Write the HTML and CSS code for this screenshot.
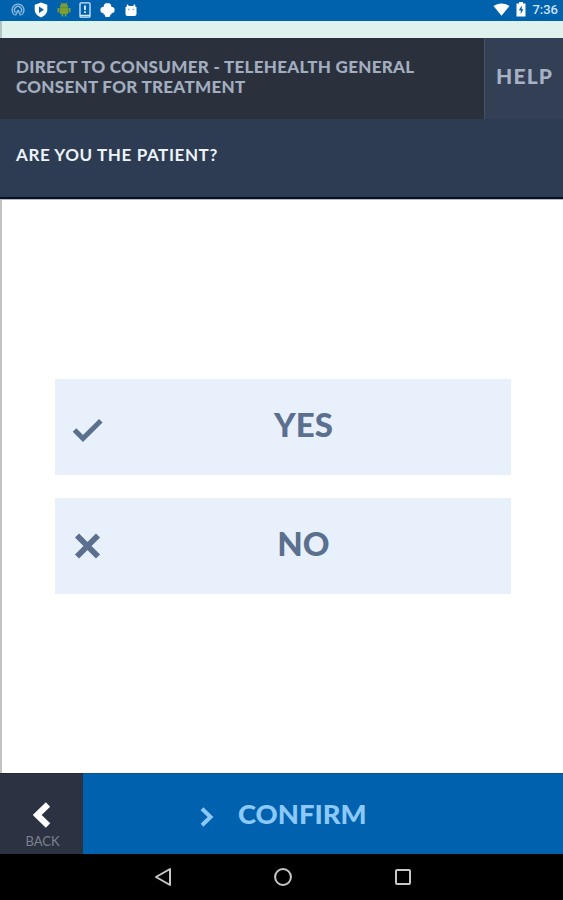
FILE: index.html
```html
<!DOCTYPE html>
<html lang="en">
<head>
    <meta charset="UTF-8">
    <meta name="viewport" content="width=device-width, initial-scale=1.0">
    <title>Consent for Treatment</title>
    <link rel="stylesheet" href="styles.css">
</head>
<body>

<div class="status-bar">
    <div class="status-icons">
        <svg width="14" height="14" viewBox="0 0 14 14" fill="none" stroke="#8dbbe0" stroke-width="1.4">
            <path d="M3.500 12A6 6 0 1 1 10.500 12"/>
            <path d="M4.500 9.500A3.500 3.500 0 1 1 9.500 9.500"/>
            <path d="M7 7L4.500 12.500M7 7L9.500 12.500"/>
        </svg>
        <svg width="14" height="16" viewBox="0 0 14 16">
            <path d="M7 .5L13.300 2.800V7.500C13.300 11 10.800 14 7 15.500C3.200 14 .7 11 .7 7.500V2.800Z" fill="#fff"/>
            <path d="M5 4.500L10 7.800L5 11Z" fill="#1260a6"/>
        </svg>
        <svg width="14" height="15" viewBox="0 0 14 15" fill="#7b9f35">
            <path d="M3 5.200A4 4 0 0 1 11 5.200ZM3 5.500H11V12H9.500V14.500H7.800V12H6.200V14.500H4.500V12H3ZM.5 6H2.500V10.500H.5ZM11.500 6H13.500V10.500H11.500Z"/>
            <path d="M4 .5L5.500 3M10 .5L8.500 3" stroke="#7b9f35"/>
        </svg>
        <svg width="12" height="16" viewBox="0 0 12 16">
            <rect x="1" y=".8" width="10" height="14.400" rx="1" fill="none" stroke="#d5e8f7" stroke-width="1.300"/>
            <path d="M1 13.500H11" stroke="#d5e8f7" stroke-width="1.500"/>
            <path d="M6 3.500V8M6 9.300V11" stroke="#fff" stroke-width="1.600"/>
        </svg>
        <svg width="15" height="16" viewBox="0 0 15 16" fill="#fff">
            <path d="M3.500 5L4 2.800L5.500 1.300H9.500L11 2.800L11.500 5H13L14.500 6.500V9.500L13 11H11.500V12.500H10.500L9.500 15H5.500L4.500 12.500H3.500V11H2L.5 9.500V6.500L2 5Z"/>
        </svg>
        <svg width="14" height="14" viewBox="0 0 14 14">
            <path d="M1.500 4H2.500L3 1L5 3H9L11 1L11.500 4H12.500V11Q12.500 13 10.500 13H3.500Q1.500 13 1.500 11Z" fill="#fff"/>
            <path d="M4 6.500H5.500M8.500 6.500H10" stroke="#7eafe0" stroke-width="1.300"/>
        </svg>
    </div>
    <div class="status-right">
        <svg width="17" height="13" viewBox="0 0 17 13" fill="#fff">
            <path d="M.5 3C5 -.5 12 -.5 16.500 3L8.500 12.800Z"/>
        </svg>
        <svg class="battery" width="10" height="15" viewBox="0 0 10 15">
            <path d="M3 0H7V1.500H9.500V14.500H.5V1.500H3Z" fill="#fff"/>
            <path d="M5.800 3.500L2.800 8.300H4.700V12L7.500 7.200H5.800Z" fill="#0a63ae"/>
        </svg>
        <span class="clock">7:36</span>
    </div>
</div>

<div class="top-strip"></div>

<header class="header">
    <h1 class="title">DIRECT TO CONSUMER - TELEHEALTH GENERAL<br>CONSENT FOR TREATMENT</h1>
    <div class="help">HELP</div>
</header>

<section class="question">
    <h2 class="question-text">ARE YOU THE PATIENT?</h2>
</section>

<main class="options">
    <div class="option">
        <svg class="option-icon" width="32" height="26" viewBox="0 0 32 26" fill="none" stroke="#5b6f8f" stroke-width="5">
            <path d="M2.500 13L11 21.500L28.800 3.700"/>
        </svg>
        <span class="option-label">YES</span>
    </div>
    <div class="option">
        <svg class="option-icon icon-no" width="32" height="26" viewBox="0 0 32 26" fill="none" stroke="#5b6f8f" stroke-width="5.800">
            <path d="M5 2.500L26 23.500M26 2.500L5 23.500"/>
        </svg>
        <span class="option-label">NO</span>
    </div>
</main>

<footer class="footer">
    <div class="back">
        <svg width="18" height="26" viewBox="0 0 18 26" fill="none" stroke="#fff" stroke-width="6.200">
            <path d="M15 2.500L4.200 13L15 23.500"/>
        </svg>
        <span class="back-label">BACK</span>
    </div>
    <div class="confirm">
        <svg class="confirm-icon" width="14" height="20" viewBox="0 0 14 20" fill="none" stroke="#8cc8f8" stroke-width="4">
            <path d="M2 1.800L10.500 10L2 18.200"/>
        </svg>
        <span class="confirm-label">CONFIRM</span>
    </div>
</footer>

<nav class="nav-bar">
    <svg width="20" height="20" viewBox="0 0 20 20" fill="none" stroke="#c8c8c8" stroke-width="2" stroke-linejoin="round">
        <path d="M17 2V18L3 10Z"/>
    </svg>
    <svg width="20" height="20" viewBox="0 0 20 20" fill="none" stroke="#c8c8c8" stroke-width="2">
        <circle cx="10" cy="10" r="7.900"/>
    </svg>
    <svg width="20" height="20" viewBox="0 0 20 20" fill="none" stroke="#c8c8c8" stroke-width="2">
        <rect x="3" y="3" width="14" height="14" rx="1"/>
    </svg>
</nav>

</body>
</html>
```
FILE: styles.css
```css
* {
    box-sizing: border-box;
}

body {
    margin: 0;
    height: 900px;
    display: flex;
    flex-direction: column;
    overflow: hidden;
    background-color: #fff;
    font-family: Lato, "Open Sans", sans-serif;
}

svg {
    display: block;
    flex-shrink: 0;
}

.status-bar {
    height: 21px;
    padding: 0 5px 2px 11px;
    display: flex;
    align-items: center;
    justify-content: space-between;
    background-color: #0061ad;
}

.status-icons {
    display: flex;
    align-items: center;
    gap: 8.8px;
}

.status-right {
    display: flex;
    align-items: center;
}

.battery {
    margin: 0 6px 0 6px;
}

.clock {
    color: #cfe4f6;
    font-family: Roboto, sans-serif;
    font-size: 13px;
    line-height: 18px;
    font-weight: 500;
}

.top-strip {
    height: 17px;
    background-color: #dff2ee;
    border-left: 2px solid #b4c4c4;
}

.header {
    height: 81px;
    display: flex;
    background-color: #2a313d;
}

.title {
    flex: 1;
    margin: 0;
    padding: 19px 0 0 16px;
    color: #a2adbf;
    font-size: 17px;
    line-height: 20px;
    font-weight: 900;
    letter-spacing: 0.3px;
    white-space: nowrap;
}

.help {
    width: 79px;
    padding: 0 0 6px 11px;
    display: flex;
    align-items: center;
    background-color: #323f54;
    border-left: 1px solid #465266;
    color: #a6b1c4;
    font-size: 21px;
    font-weight: 900;
    letter-spacing: 1.2px;
}

.question {
    height: 80px;
    padding: 26px 0 0 16px;
    background-color: #2d3c53;
    border-bottom: 2px solid #071027;
}

.question-text {
    margin: 0;
    color: #edf3fb;
    font-size: 17px;
    line-height: 20px;
    font-weight: 700;
    letter-spacing: 0.6px;
}

.options {
    flex: 1;
    padding: 179px 52px 0 53px;
    border-top: 1px solid #b5b8be;
    border-left: 2px solid #c2c2c2;
    display: flex;
    flex-direction: column;
    gap: 23px;
}

.option {
    height: 96px;
    padding-left: 17px;
    display: flex;
    align-items: center;
    background-color: #e8f0fb;
    color: #5b6f8f;
}

.option-icon {
    margin-top: 5px;
}

.icon-no {
    margin-top: 0;
}

.option-label {
    flex: 1;
    padding: 0 8px 6px 0;
    text-align: center;
    font-size: 33px;
    line-height: 40px;
    font-weight: 900;
}

.footer {
    height: 81px;
    display: flex;
}

.back {
    width: 83px;
    padding-top: 28px;
    display: flex;
    flex-direction: column;
    align-items: center;
    background-color: #2b3242;
    border-top: 1px solid #232a38;
}

.back-label {
    margin: 5px 0 0 2px;
    color: #7d828c;
    font-size: 13px;
    line-height: 16px;
}

.confirm {
    flex: 1;
    padding-left: 117px;
    display: flex;
    align-items: center;
    background-color: #0062ae;
    border-top: 1px solid #0a548f;
}

.confirm-icon {
    margin-top: 5px;
}

.confirm-label {
    margin-left: 24px;
    color: #8cc8f8;
    font-size: 27.4px;
    line-height: 32px;
    font-weight: 900;
}

.nav-bar {
    height: 46px;
    padding-left: 3px;
    display: flex;
    align-items: center;
    justify-content: center;
    gap: 100px;
    background-color: #000;
}
```
